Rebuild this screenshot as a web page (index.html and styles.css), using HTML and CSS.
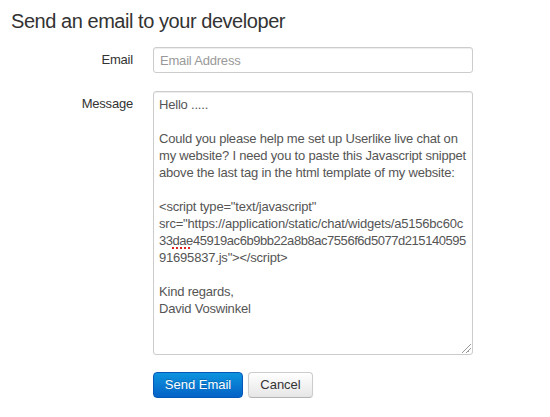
FILE: index.html
```html
<!DOCTYPE html>
<html>
<head>
<meta charset="utf-8">
<link rel="stylesheet" href="styles.css">
</head>
<body>
<h1 class="title">Send an email to your developer</h1>
<form class="form">
  <label class="label label-email" for="email">Email</label>
  <input class="input" id="email" type="text" placeholder="Email Address">
  <label class="label label-message" for="message">Message</label>
  <div class="textarea" id="message" role="textbox" aria-multiline="true">
    <div class="line">Hello .....</div>
    <div class="line blank"></div>
    <div class="line">Could you please help me set up Userlike live chat on</div>
    <div class="line">my website? I need you to paste this Javascript snippet</div>
    <div class="line">above the last tag in the html template of my website:</div>
    <div class="line blank"></div>
    <div class="line">&lt;script type="text/javascript"</div>
    <div class="line">src="https://application/static/chat/widgets/a5156bc60c</div>
    <div class="line hash">33<span class="misspelled">dae</span>45919ac6b9bb22a8b8ac7556f6d5077d215140595</div>
    <div class="line">91695837.js"&gt;&lt;/script&gt;</div>
    <div class="line blank"></div>
    <div class="line">Kind regards,</div>
    <div class="line">David Voswinkel</div>
    <span class="grip" aria-hidden="true"></span>
  </div>
  <div class="actions">
    <button class="btn btn-primary" type="button">Send Email</button>
    <button class="btn btn-default" type="button">Cancel</button>
  </div>
</form>
</body>
</html>
```
FILE: styles.css
```css
html, body {
  margin: 0;
  padding: 0;
  background: #ffffff;
}
body {
  padding: 0 11px;
  font-family: "Liberation Sans", Arial, sans-serif;
  color: #333333;
}
.title {
  margin: 9px 0 0 0;
  font-size: 20px;
  line-height: 24px;
  font-weight: normal;
  letter-spacing: -0.45px;
  color: #333333;
}
.form {
  display: grid;
  grid-template-columns: 122px 320px;
  column-gap: 20px;
  margin-top: 14px;
}
.label {
  justify-self: end;
  font-size: 13px;
  letter-spacing: -0.2px;
  color: #333333;
}
.label-email {
  line-height: 26px;
}
.label-message {
  margin-top: 22px;
  line-height: 17px;
}
.input {
  box-sizing: border-box;
  width: 320px;
  height: 26px;
  margin: 0;
  padding: 0 6px;
  border: 1px solid #cccccc;
  border-radius: 3px;
  box-shadow: inset 0 1px 1px rgba(0,0,0,0.075);
  font-family: "Liberation Sans", Arial, sans-serif;
  font-size: 13px;
  letter-spacing: -0.2px;
  color: #555555;
  outline: none;
}
.input::placeholder {
  color: #999999;
}
.textarea {
  position: relative;
  box-sizing: border-box;
  width: 320px;
  height: 264px;
  margin: 18px 0 0 0;
  padding: 4px 5px;
  border: 1px solid #cccccc;
  border-radius: 3px;
  box-shadow: inset 0 1px 1px rgba(0,0,0,0.075);
  font-size: 13px;
  line-height: 17px;
  letter-spacing: -0.2px;
  color: #555555;
  overflow: hidden;
}
.line {
  height: 17px;
  white-space: pre;
}
.hash {
  letter-spacing: -0.45px;
}
.misspelled {
  text-decoration: underline dotted #e02020;
  text-decoration-thickness: 2px;
  text-underline-offset: 2px;
}
.grip {
  position: absolute;
  right: 1px;
  bottom: 1px;
  width: 9px;
  height: 9px;
  background:
    linear-gradient(135deg, transparent 0 45%, #9a9a9a 45% 55%, transparent 55% 100%) no-repeat 100% 100% / 9px 9px,
    linear-gradient(135deg, transparent 0 45%, #9a9a9a 45% 60%, transparent 60% 100%) no-repeat 100% 100% / 5px 5px;
}
.actions {
  grid-column: 2;
  display: flex;
  gap: 5px;
  margin-top: 17px;
}
.btn {
  box-sizing: border-box;
  height: 26px;
  margin: 0;
  padding: 0;
  border-radius: 4px;
  font-family: "Liberation Sans", Arial, sans-serif;
  font-size: 13px;
  line-height: 24px;
  text-align: center;
  cursor: pointer;
}
.btn-primary {
  width: 90px;
  color: #ffffff;
  border: 1px solid #0558b8;
  background: linear-gradient(to bottom, #0d94de, #0462c6);
  text-shadow: 0 -1px 0 rgba(0,0,0,0.2);
}
.btn-default {
  width: 65px;
  color: #333333;
  border: 1px solid #cccccc;
  border-bottom-color: #b3b3b3;
  background: linear-gradient(to bottom, #ffffff, #e6e6e6);
  box-shadow: inset 0 1px 0 rgba(255,255,255,0.2), 0 1px 2px rgba(0,0,0,0.05);
}
```
